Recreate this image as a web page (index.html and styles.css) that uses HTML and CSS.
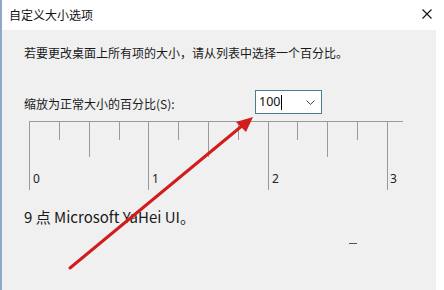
FILE: index.html
```html
<!DOCTYPE html>
<html lang="zh-CN">
<head>
<meta charset="utf-8">
<link rel="stylesheet" href="styles.css">
</head>
<body>
<div class="window">
  <div class="titlebar">
    <span class="title">自定义大小选项</span>
    <svg class="close" width="10" height="10" viewBox="0 0 10 10"><path d="M0.5 0.5L9.5 9.5M9.5 0.5L0.5 9.5" stroke="#111" stroke-width="1.1" fill="none"/></svg>
  </div>
  <div class="main">
    <div class="content">
      <p class="intro">若要更改桌面上所有项的大小，请从列表中选择一个百分比。</p>
      <div class="scale-row">
        <span class="label">缩放为正常大小的百分比(S):</span>
        <div class="combo">
          <span class="value">100</span><span class="caret"></span>
          <svg class="chev" width="9" height="5" viewBox="0 0 9 5"><path d="M0.5 0.5L4.5 4.5L8.5 0.5" stroke="#444" stroke-width="1" fill="none"/></svg>
        </div>
      </div>
      <svg class="ruler" width="390" height="75" viewBox="0 0 390 75">
        <g stroke="#9a9a9a" stroke-width="1" fill="none">
          <path d="M5 0.5H379"/>
          <path d="M5.5 0V69M35.5 0V19M65.5 0V36M95.5 0V19M124.5 0V69M154.5 0V19M184.5 0V36M214.5 0V19M244.5 0V69M273.5 0V19M303.5 0V36M333.5 0V19M363.5 0V69"/>
        </g>
        <g class="ruler-num" fill="#222">
          <text x="9" y="62">0</text>
          <text x="128" y="62">1</text>
          <text x="248" y="62">2</text>
          <text x="366" y="62">3</text>
        </g>
      </svg>
      <p class="font-info">9 点 Microsoft YaHei UI。</p>
      <div class="dash-row"><span class="dash"></span></div>
    </div>
    <div class="side"></div>
  </div>
  <svg class="arrow" width="444" height="290" viewBox="0 0 444 290">
    <path d="M70 268L243 125" stroke="#d21d1d" stroke-width="3" stroke-linecap="round" fill="none"/>
    <path d="M253 117L236 122L246 132Z" fill="#d21d1d"/>
  </svg>
</div>
</body>
</html>
```
FILE: styles.css
```css
html, body {
  margin: 0;
  padding: 0;
  background: #ffffff;
}
.window {
  position: relative;
  width: 444px;
  height: 290px;
  box-sizing: border-box;
  border-left: 2px solid #8fa9c4;
  display: flex;
  flex-direction: column;
  font-family: "Noto Sans CJK SC", "Noto Sans", sans-serif;
  color: #1a1a1a;
  overflow: hidden;
}
.titlebar {
  height: 30px;
  flex: none;
  display: flex;
  align-items: center;
  justify-content: space-between;
  padding: 0 12px 0 7px;
  background: #ffffff;
}
.title {
  font-size: 12px;
  line-height: 16px;
  color: #111;
}
.close {
  display: block;
  margin-top: -2px;
}
.main {
  flex: 1;
  display: flex;
}
.content {
  flex: 1;
  background: #f0f0f0;
  padding: 15px 0 0 22px;
}
.side {
  width: 8px;
  background: #ffffff;
}
.intro {
  margin: 0;
  font-size: 12px;
  line-height: 16px;
}
.scale-row {
  margin-top: 29px;
  display: flex;
  align-items: center;
  height: 24px;
}
.label {
  font-size: 12px;
  line-height: 16px;
  width: 231px;
  padding-top: 4px;
}
.combo {
  width: 67px;
  height: 24px;
  box-sizing: border-box;
  border: 1px solid #4b7c93;
  background: #ffffff;
  display: flex;
  align-items: center;
  padding-left: 3px;
}
.value {
  font-family: "Noto Sans", sans-serif;
  font-size: 12.5px;
  line-height: 16px;
  color: #111;
}
.caret {
  width: 1px;
  height: 15px;
  background: #000;
  margin-left: 1px;
}
.chev {
  display: block;
  margin-left: auto;
  margin-right: 6px;
}
.ruler {
  display: block;
  margin-top: 7px;
}
.ruler-num text {
  font-family: "Noto Sans", sans-serif;
  font-size: 12px;
}
.font-info {
  margin: 11px 0 0 0;
  font-size: 15px;
  line-height: 20px;
  color: #1a1a1a;
}
.dash-row {
  display: flex;
  padding-left: 325px;
  margin-top: 16px;
}
.dash {
  width: 8px;
  height: 1px;
  background: #555;
}
.arrow {
  position: absolute;
  left: -2px;
  top: 0;
  pointer-events: none;
}
```
